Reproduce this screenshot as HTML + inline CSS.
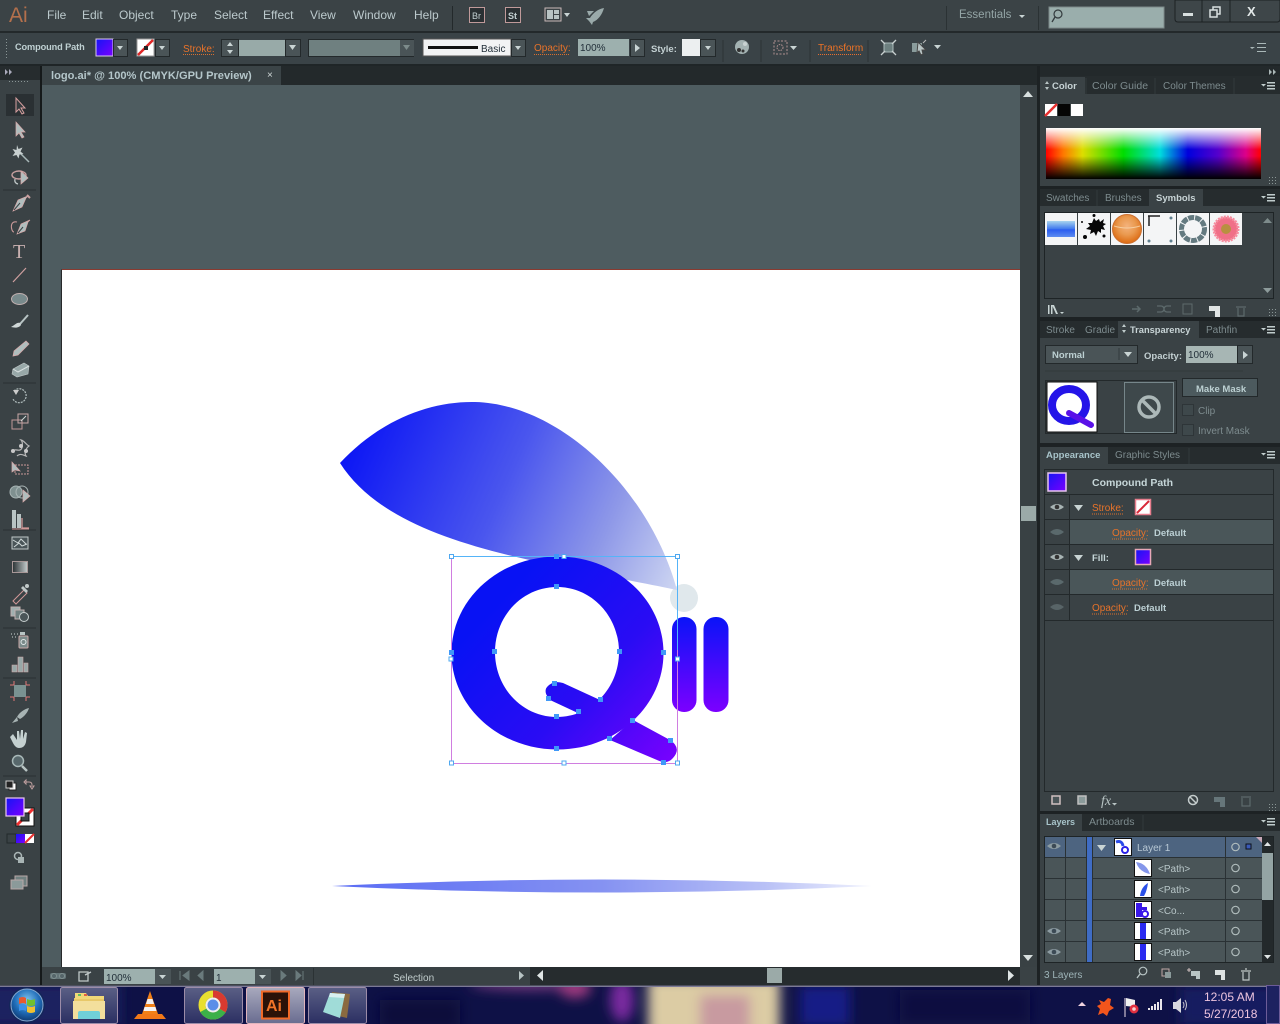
<!DOCTYPE html>
<html><head><meta charset="utf-8"><title>Adobe Illustrator</title>
<style>
html,body{margin:0;padding:0;background:#3a4245;width:1280px;height:1024px;overflow:hidden}
svg{display:block;position:absolute;left:0;top:0;filter:blur(.3px)}
text{font-family:"Liberation Sans",sans-serif;font-size:10px;fill:#c3d0d2}
.m{font-size:12px;fill:#bccacd}
.b{font-weight:bold;font-size:9.500px}
.o{fill:#e8732a}
.d{fill:#7d8b8e}
.k{fill:#23303a}
.ic{fill:#b0bebe;stroke:#d8a8a8;stroke-width:.7}
.st{fill:none;stroke:#c0c8c8;stroke-width:1.3}
.ar{fill:#c9d4d4}
</style></head><body>
<svg width="1280" height="1024" viewBox="0 0 1280 1024" xmlns="http://www.w3.org/2000/svg">
<defs>
<linearGradient id="leaf" gradientUnits="userSpaceOnUse" x1="345" y1="440" x2="680" y2="590"><stop offset="0" stop-color="#0a14f5"/><stop offset=".45" stop-color="#4a56ee"/><stop offset=".75" stop-color="#8e98e8"/><stop offset="1" stop-color="#d0d8f2"/></linearGradient>
<linearGradient id="q" gradientUnits="userSpaceOnUse" x1="500" y1="600" x2="680" y2="770"><stop offset="0" stop-color="#0812f4"/><stop offset=".5" stop-color="#2a0cf4"/><stop offset="1" stop-color="#8000ff"/></linearGradient>
<linearGradient id="bar" x1="0" y1="0" x2="0" y2="1"><stop offset="0" stop-color="#0a14f8"/><stop offset="1" stop-color="#7c00ff"/></linearGradient>
<linearGradient id="sh" x1="0" y1="0" x2="1" y2="0"><stop offset="0" stop-color="#5a6cf4"/><stop offset=".5" stop-color="#8592f2"/><stop offset=".8" stop-color="#b8c0f6"/><stop offset="1" stop-color="#f0f2fd"/></linearGradient>
<linearGradient id="fillg" x1="0" y1="0" x2="1" y2="1"><stop offset="0" stop-color="#1414f5"/><stop offset="1" stop-color="#7a00ff"/></linearGradient>
<linearGradient id="hue" x1="0" y1="0" x2="1" y2="0"><stop offset="0" stop-color="#f00"/><stop offset=".08" stop-color="#f70"/><stop offset=".17" stop-color="#dd0"/><stop offset=".36" stop-color="#0d0"/><stop offset=".53" stop-color="#0dd"/><stop offset=".66" stop-color="#00d"/><stop offset=".8" stop-color="#50c"/><stop offset=".93" stop-color="#d08"/><stop offset="1" stop-color="#f00"/></linearGradient>
<linearGradient id="wb" x1="0" y1="0" x2="0" y2="1"><stop offset="0" stop-color="#fff"/><stop offset=".42" stop-color="#fff" stop-opacity="0"/><stop offset=".55" stop-color="#000" stop-opacity="0"/><stop offset="1" stop-color="#000"/></linearGradient>
<linearGradient id="btn" x1="0" y1="0" x2="0" y2="1"><stop offset="0" stop-color="#5a5f85"/><stop offset="1" stop-color="#2b2f62"/></linearGradient>
<linearGradient id="btnA" x1="0" y1="0" x2="0" y2="1"><stop offset="0" stop-color="#a8a9bd"/><stop offset="1" stop-color="#696c90"/></linearGradient>
<linearGradient id="tg" x1="0" y1="0" x2="1" y2="0"><stop offset="0" stop-color="#2a3134"/><stop offset="1" stop-color="#c4cccc"/></linearGradient>
<radialGradient id="orb" cx=".5" cy=".35" r=".7"><stop offset="0" stop-color="#7fc4ee"/><stop offset=".55" stop-color="#1f6cb8"/><stop offset="1" stop-color="#0c3266"/></radialGradient>
<linearGradient id="bl" x1="0" y1="0" x2="0" y2="1"><stop offset="0" stop-color="#a8d4ee"/><stop offset=".5" stop-color="#3f78ee"/><stop offset=".55" stop-color="#2a5cf0"/><stop offset="1" stop-color="#5d8cf0"/></linearGradient>
<radialGradient id="orng" cx=".5" cy=".4" r=".6"><stop offset="0" stop-color="#f4b27c"/><stop offset=".5" stop-color="#ea9a50"/><stop offset="1" stop-color="#dd6a10"/></radialGradient>
<filter id="blur" x="-30%" y="-80%" width="160%" height="260%"><feGaussianBlur stdDeviation="6"/></filter>
<clipPath id="tb"><rect x="0" y="986" width="1280" height="38"/></clipPath>
<pattern id="grip" width="3" height="3" patternUnits="userSpaceOnUse"><rect width="1" height="1" fill="#8a9696"/></pattern>
</defs>

<!-- base -->
<rect width="1280" height="1024" fill="#3a4245"/>
<rect y="0" width="1280" height="31" fill="#3b4346"/>
<rect y="31" width="1280" height="2" fill="#23292b"/>
<rect y="33" width="1280" height="31" fill="#3a4347"/>
<rect y="64" width="1280" height="2" fill="#1f2527"/>

<!-- title bar -->
<text x="9" y="22" style="font-size:21px;fill:#b4704c">Ai</text>
<text class="m" x="47" y="19">File</text><text class="m" x="82" y="19">Edit</text><text class="m" x="119" y="19">Object</text><text class="m" x="171" y="19">Type</text><text class="m" x="214" y="19">Select</text><text class="m" x="263" y="19">Effect</text><text class="m" x="310" y="19">View</text><text class="m" x="353" y="19">Window</text><text class="m" x="414" y="19">Help</text>
<rect x="452" y="6" width="1" height="24" fill="#23292b"/>
<rect x="469.500" y="7.500" width="15" height="15" fill="#2a3033" stroke="#c09a9a"/><text x="472" y="19" style="font-size:9px">Br</text>
<rect x="505.500" y="7.500" width="15" height="15" fill="#2a3033" stroke="#c09a9a"/><text x="508" y="19" class="b" style="font-size:9px">St</text>
<rect x="545" y="8" width="16" height="13" fill="none" stroke="#c9b8b8"/><rect x="547" y="10" width="6" height="9" fill="#b8c4c4"/><rect x="554" y="10" width="5" height="4" fill="#b8c4c4"/><rect x="554" y="15" width="5" height="4" fill="#b8c4c4"/><path class="ar" d="M564 13h6l-3 4z"/>
<path d="M604 8 C598 9 593 13 590 18 L586 18 L589 21 L592 25 L593 22 C598 20 602 15 604 8Z M587 11 L594 11 L589 16Z" fill="#9aaaaa"/>
<rect x="946" y="6" width="1" height="24" fill="#2b3234"/><rect x="1038" y="6" width="1" height="24" fill="#2b3234"/>
<text x="959" y="18" style="font-size:11.500px;fill:#94a5a6">Essentials</text><path class="ar" d="M1019 15h6l-3 3z"/>
<rect x="1049" y="7" width="115" height="21" fill="#9aaeac" stroke="#7d8a8a"/><circle cx="1058" cy="14" r="4" fill="none" stroke="#333b3e" stroke-width="1.200"/><path d="M1055 17l-3 5" stroke="#333b3e" stroke-width="1.300"/>
<path d="M1175 0h105v19q0 3-3 3h-99q-3 0-3-3z" fill="#3e4649" stroke="#1c2123"/>
<path d="M1202 0v22M1230 0v22" stroke="#1c2123"/>
<rect x="1183" y="13" width="10" height="3" fill="#d8dfdf"/>
<rect x="1213" y="7" width="7" height="7" fill="none" stroke="#d8dfdf" stroke-width="1.500"/><rect x="1210" y="10" width="7" height="7" fill="#3e4649" stroke="#d8dfdf" stroke-width="1.500"/>
<text x="1247" y="16" class="b" style="font-size:13px;fill:#e2e8e8">X</text>

<!-- options bar -->
<rect x="5" y="38" width="2" height="22" fill="url(#grip)"/>
<text x="15" y="50" class="b" style="font-size:9.200px;letter-spacing:-.1px;fill:#bfd0d2">Compound Path</text>
<rect x="96" y="39" width="17" height="17" fill="url(#fillg)" stroke="#d8c8e8"/><rect x="113.500" y="39.500" width="14" height="17" fill="#4a5457" stroke="#23292b"/><path class="ar" d="M117 46h6l-3 4z"/>
<rect x="137" y="39" width="17" height="17" fill="#fff" stroke="#999"/><path d="M138 55L153 40" stroke="#e02828" stroke-width="2.500"/><rect x="144" y="46" width="4" height="4" fill="#222"/><rect x="155.500" y="39.500" width="14" height="17" fill="#4a5457" stroke="#23292b"/><path class="ar" d="M159 46h6l-3 4z"/>
<text x="183" y="52" class="o">Stroke:</text><path d="M183 54.500h31" stroke="#d87030" stroke-dasharray="1 1"/>
<rect x="221.500" y="39.500" width="17" height="17" fill="#4a5457" stroke="#23292b"/><path class="ar" d="M227 46l3-4 3 4zM227 50l3 4 3-4z"/><rect x="239" y="40" width="46" height="16" fill="#98aaa8"/><rect x="285.500" y="39.500" width="15" height="17" fill="#4a5457" stroke="#23292b"/><path class="ar" d="M289 45h7l-3.500 5z"/>
<rect x="308.500" y="39.500" width="105" height="17" fill="#6f8080" stroke="#23292b"/><rect x="400" y="40" width="14" height="16" fill="#4a5457"/><path d="M403 45h7l-3.500 5z" fill="#7d8b8b"/>
<rect x="423" y="39" width="88" height="17" fill="#f2f3f4" stroke="#555"/><rect x="428" y="46" width="50" height="3" fill="#111"/><text x="481" y="52" class="k" style="font-size:10px">Basic</text><rect x="511.500" y="39.500" width="14" height="17" fill="#4a5457" stroke="#23292b"/><path class="ar" d="M515 46h6l-3 4z"/>
<text x="534" y="51" class="o">Opacity:</text><path d="M534 54.500h36" stroke="#d87030" stroke-dasharray="1 1"/>
<rect x="578" y="39" width="51" height="17" fill="#9db0ae"/><text x="580" y="51" class="k" style="font-size:10px">100%</text><rect x="630.500" y="39.500" width="14" height="17" fill="#4a5457" stroke="#23292b"/><path class="ar" d="M635 44l5 4-5 4z"/>
<text x="651" y="52" class="b">Style:</text>
<rect x="682" y="39" width="18" height="17" fill="#eceff0"/><rect x="700.500" y="39.500" width="15" height="17" fill="#4a5457" stroke="#23292b"/><path class="ar" d="M705 46h6l-3 4z"/>
<path d="M723 40v22M761 40v22M810 40v22M868 40v22" stroke="#2c3335"/>
<circle cx="742" cy="47" r="7" fill="#a3b2b2"/><circle cx="739" cy="50" r="2" fill="#333"/><circle cx="743" cy="51" r="1.500" fill="#333"/><circle cx="745" cy="44" r="2" fill="#c8d2d2"/>
<rect x="774" y="41" width="13" height="13" fill="none" stroke="#b09090" stroke-dasharray="2 1.500"/><circle cx="780" cy="47.500" r="3" fill="none" stroke="#b09090" stroke-dasharray="1.500 1"/><path class="ar" d="M790 46h7l-3.500 4z"/>
<text x="818" y="51" style="font-size:10px;fill:#ee7326">Transform</text><path d="M818 54.500h44" stroke="#e87030" stroke-dasharray="1 1"/>
<rect x="884" y="43" width="9" height="9" fill="#6d8080" stroke="#a8b8b8"/><path d="M881 40l4 4M896 40l-4 4M881 55l4-4M896 55l-4-4" stroke="#c8d0d0" stroke-width="1.300"/>
<rect x="912" y="43" width="10" height="9" fill="#8a9c9c"/><path d="M918 42l8 8-4 0 1 4-2 1-2-4-2 2z" fill="#b8c4c4" stroke="#444"/><path d="M926 40l-3 3" stroke="#bbb"/><path class="ar" d="M934 45h7l-3.500 4z"/>
<path d="M1250 47h5l-3 2zM1257 43h9v1h-9zM1257 47h9v1h-9zM1257 51h9v1h-9z" fill="#aab8b8"/>

<!-- tab row -->
<rect y="66" width="1280" height="19" fill="#23292b"/>
<rect x="41" y="66" width="240" height="19" fill="#3b4447"/>
<text x="51" y="79" class="b" style="font-size:11.100px;fill:#b4c6ca">logo.ai* @ 100% (CMYK/GPU Preview)</text>
<text x="267" y="78" style="font-size:10px;fill:#d0d8d8">×</text>

<!-- left toolbar -->
<rect x="0" y="66" width="40" height="920" fill="#3a4245"/>
<rect x="0" y="66" width="40" height="14" fill="#262c2e"/>
<path d="M5 69l3 3-3 3zM9 69l3 3-3 3z" fill="#aab"/>
<rect x="40" y="66" width="2" height="902" fill="#15191a"/>
<rect x="9" y="80" width="20" height="3" fill="url(#grip)"/>
<rect x="6" y="94" width="28" height="22" fill="#2a3033"/>
<path d="M3 190h33M3 383h33M3 530h33M3 628h33M3 678h33M3 776h33" stroke="#2a3032"/>
<!-- tool icons -->
<path d="M16 98l0 14 3-3 3 5 2-1-3-5 4 0z" fill="#333b3e" stroke="#d8a0a0"/>
<path class="ic" d="M16 122l0 14 3-3 3 5 2-1-3-5 4 0z"/>
<path d="M20 153l9 9" stroke="#a8b8b8" stroke-width="1.500"/><path d="M17 145l1.500 4 4-1.500-2 4 3 2.500-4 .5-1 4-2-3.500-4 1 2.500-3.500-2.500-3.500 4 1z" fill="#c8d0d0"/>
<ellipse cx="19" cy="175" rx="7" ry="4" fill="none" stroke="#c8a0a0" stroke-width="1.400"/><path class="ic" d="M21 171v13l7-6z"/><path d="M15 179q-1 4 3 5" class="st"/>
<path class="ic" d="M28 196l-10 4-5 11 9-4 4-9z"/><path d="M27 195l3 3" stroke="#c8a0a0" stroke-width="2"/><path d="M14 210l6-7" stroke="#3a4245"/>
<path class="ic" d="M30 220l-9 4-4 10 8-3 3-9z"/><path d="M17 222c-8-2-6 10-3 10" fill="none" stroke="#c89898" stroke-width="1.100"/><path d="M18 233l5-6" stroke="#3a4245"/>
<text x="13" y="258" style="font-family:'Liberation Serif',serif;font-size:20px;fill:#c8b0b0">T</text>
<path d="M13 282l13-14" stroke="#d0a0a0" stroke-width="1.200"/>
<ellipse cx="19.500" cy="299" rx="8" ry="5.500" fill="#788a8c" stroke="#c0b0b0"/>
<path d="M28 315l-8 9" stroke="#b8c4c4" stroke-width="2"/><path d="M20 323c-3-1-5 2-9 4 4 1 8 1 10-2z" fill="#d0d8d8"/>
<path class="ic" d="M26 341l3 3-11 11-5 1 1-5z"/>
<path d="M13 369l11-6 5 3-1 8-11 3-5-3z" fill="#98a8a8" stroke="#c0c8c8" stroke-width=".6"/><path d="M13 369l5 3 11-6" fill="none" stroke="#d8e0e0"/>
<path d="M14 391a7 7 0 1 1-1 8" fill="none" stroke="#b0bcbc" stroke-width="1.200" stroke-dasharray="2 1"/><path d="M16 395l-3-5 6 0z" fill="#ccc"/>
<rect x="12" y="420" width="10" height="9" fill="none" stroke="#c09898"/><rect x="18" y="414" width="10" height="9" fill="none" stroke="#c8a8a8"/><path d="M21 421l5-5" stroke="#d0d8d8"/>
<path d="M12 452c3-4 5-1 8-2s3-8 1-10c4 1 4 4 8 6-3 2-5 7-3 10-3-1-6-3-9 0" fill="none" stroke="#b8b8b8" stroke-width="1.200"/><circle cx="13" cy="451" r="2" fill="#c8c8c8"/><circle cx="21" cy="446" r="2" fill="#c8c8c8"/><circle cx="26" cy="451" r="2" fill="#c8c8c8"/>
<rect x="15" y="465" width="13" height="9" fill="none" stroke="#c89898" stroke-dasharray="2 1"/><path class="ic" d="M12 462v10l3-2 5 1z"/>
<circle cx="16" cy="492" r="6" fill="#7f9090" stroke="#a8b4b4"/><circle cx="22" cy="492" r="6" fill="none" stroke="#a8b4b4"/><path class="ic" d="M23 490v12l7-6z"/>
<path d="M12 510v18h4v-18zM17 514v14h4v-14z" fill="#b8c4c4"/><path d="M22 518v10h7" fill="none" stroke="#d09898" stroke-width="1.300"/><path d="M12 529h17" stroke="#d09898"/>
<rect x="12" y="537" width="16" height="12" fill="#4a5558" stroke="#c0c8c8"/><path d="M13 540l5 3 3-4 5 5M14 547l5-4 3 3 5-2" fill="none" stroke="#d0d8d8"/>
<rect x="12.500" y="561.500" width="15" height="11" fill="url(#tg)" stroke="#a89898"/>
<path d="M13 601l11-11 3 3-11 11z" fill="#3a4245" stroke="#d09898"/><path d="M23 586l5 5-2 2-5-5z" fill="#c0c8c8"/><circle cx="27" cy="586" r="2" fill="#c0c8c8"/>
<rect x="11" y="607" width="9" height="9" fill="#a0b0b0" stroke="#c0b0b0"/><rect x="15" y="610" width="9" height="9" fill="#708080" stroke="#c0b0b0"/><circle cx="24" cy="617" r="4.500" fill="#4a5558" stroke="#c8d0d0"/>
<path d="M11 634h1M14 634h1M17 634h1M12 637h1M15 637h1" stroke="#d0d8d8"/><rect x="19" y="636" width="9" height="12" rx="1" fill="#7a8a8a" stroke="#c8a8a8"/><circle cx="23.500" cy="642" r="2.500" fill="none" stroke="#e0e8e8"/><rect x="20" y="632" width="5" height="3" fill="#b8c4c4"/>
<path d="M12 672v-7h5v7zM18 672v-15h5v15zM24 672v-9h4v9z" fill="#98a8a8" stroke="#d0a8a8" stroke-width=".6"/>
<rect x="14" y="685" width="12" height="12" fill="#7a9292"/><path d="M10 685h4M26 685h4M10 697h4M26 697h4M14 681v4M26 681v4M14 697v4M26 697v4" stroke="#e07878"/>
<path d="M29 708c-5 1-10 5-12 9l3 2c4-2 8-7 9-11zM17 717l-5 6 6-2z" fill="#a8b4b4"/>
<path d="M13 734l4 6v-9l2 0 1 8 1-9 2 0 0 9 2-7 2 1-1 9c-1 4-3 6-7 6-3 0-5-3-6-5l-3-6z" fill="#c4d0d0"/>
<circle cx="18" cy="761" r="5.500" fill="#58686c" stroke="#a8b8b8" stroke-width="1.500"/><path d="M22 766l5 5" stroke="#b8c4c4" stroke-width="2.500"/>
<rect x="9" y="783" width="7" height="7" fill="#fff" stroke="#222"/><rect x="6" y="781" width="7" height="7" fill="#222" stroke="#ccc"/>
<path d="M26 782h3c2 0 3 1 3 3M32 789l-2-3h4zM26 780v4l-2-2z" fill="none" stroke="#c0a0a0" stroke-width="1"/>
<rect x="16" y="808" width="18" height="18" fill="#fff" stroke="#111"/><path d="M17 825L33 809" stroke="#ef3030" stroke-width="3"/><rect x="21" y="813" width="8" height="8" fill="#3a4245" stroke="#111"/>
<rect x="6" y="798" width="18" height="18" fill="url(#fillg)" stroke="#ecc8ee" stroke-width="1.200"/>
<rect x="7" y="834" width="9" height="9" fill="#3a4245" stroke="#23292b"/><rect x="16" y="834" width="9" height="9" fill="url(#fillg)"/><rect x="25" y="834" width="9" height="9" fill="#fff"/><path d="M25 843l9-9" stroke="#e83030" stroke-width="2"/>
<circle cx="18" cy="856" r="3.500" fill="none" stroke="#aab6b6" stroke-width="1.500"/><rect x="18" y="857" width="6" height="6" fill="#a8b4b4"/>
<rect x="15" y="876" width="12" height="10" fill="#708080" stroke="#b8a8a8"/><rect x="11" y="880" width="12" height="9" fill="#8b9a9a" stroke="#b8a8a8"/>

<!-- canvas -->
<rect x="42" y="85" width="978" height="882" fill="#4e5c60"/>
<rect x="62" y="270" width="958" height="697" fill="#fff"/>
<path d="M62 269.500H1020" stroke="#8a3a30"/><path d="M61.500 269.500V967" stroke="#27292a"/>
<!-- artwork -->
<ellipse cx="684" cy="598" rx="14" ry="14" fill="#e0e8ec"/>
<path d="M340 463C380 420 430 401 475 402C560 404 650 490 677 590C640 582 560 568 500 553C430 535 370 510 340 463Z" fill="url(#leaf)"/>
<path fill-rule="evenodd" d="M557.500 556.500c58.500 0 106 43 106 96.500s-47.500 96.500-106 96.500-106-43-106-96.500 47.500-96.500 106-96.500zM557 587c-34.500 0-62 29-62 65s27.500 65 62 65 62-29 62-65-27.500-65-62-65z" fill="url(#q)"/>
<path d="M633 720L670 740Q682 748 673 758Q667 765 657 760L610 740Z" fill="url(#q)"/>
<path d="M563 683L600 700L610 715L580 714L550 700Q543 692 547 687Q553 680 563 683Z" fill="url(#q)"/>
<rect x="672" y="617" width="24.500" height="95" rx="12" fill="url(#bar)"/>
<rect x="703.500" y="617" width="25" height="95" rx="12" fill="url(#bar)"/>
<path d="M332 886Q600 873 872 886Q600 899 332 886Z" fill="url(#sh)"/>
<!-- selection -->
<rect x="451.500" y="556.500" width="226" height="207" fill="none" stroke="#d07ee0" stroke-width="1"/>
<path d="M451 556.500H677.500V650" fill="none" stroke="#55b4f8"/>
<g fill="#fff" stroke="#4ea8f0" stroke-width="1"><rect x="449.500" y="554.500" width="4" height="4"/><rect x="562" y="554.500" width="4" height="4"/><rect x="675.500" y="554.500" width="4" height="4"/><rect x="449" y="657" width="4" height="4"/><rect x="675.500" y="657" width="4" height="4"/><rect x="449.500" y="761" width="4" height="4"/><rect x="562" y="761" width="4" height="4"/><rect x="675.500" y="761" width="4" height="4"/></g>
<g fill="#3f98f8"><rect x="554" y="554" width="5" height="5"/><rect x="554" y="584" width="5" height="5"/><rect x="449" y="650" width="5" height="5"/><rect x="492" y="649" width="5" height="5"/><rect x="617" y="649" width="5" height="5"/><rect x="661" y="650" width="5" height="5"/><rect x="552" y="681" width="5" height="5"/><rect x="546" y="696" width="5" height="5"/><rect x="598" y="697" width="5" height="5"/><rect x="576" y="709" width="5" height="5"/><rect x="554" y="714" width="5" height="5"/><rect x="630" y="718" width="5" height="5"/><rect x="607" y="736" width="5" height="5"/><rect x="554" y="746" width="5" height="5"/><rect x="668" y="738" width="5" height="5"/><rect x="661" y="760" width="5" height="5"/></g>

<!-- v scrollbar -->
<rect x="1020" y="85" width="18" height="882" fill="#394144"/>
<rect x="1037" y="66" width="3" height="920" fill="#1d2224"/>
<path d="M1023 97l5-6 5 6z" fill="#d8dfdf"/><path d="M1023 955l5 6 5-6z" fill="#d8dfdf"/>
<rect x="1021" y="506" width="15" height="15" fill="#9baaa8"/>

<!-- status bar -->
<rect x="42" y="967" width="995" height="18" fill="#3a4245"/>
<rect x="0" y="985" width="1280" height="1" fill="#1d2224"/>
<path d="M40 968h2v17h-2z" fill="#15191a"/>
<rect x="50" y="973" width="16" height="6" rx="2" fill="#647478"/><circle cx="54" cy="976" r="2.500" fill="#55656a" stroke="#7f8f90"/><circle cx="62" cy="976" r="2.500" fill="#55656a" stroke="#7f8f90"/>
<path d="M79 972h9v9h-9zM85 975l6-3" fill="none" stroke="#c0c8c8" stroke-width="1.300"/>
<rect x="104" y="969" width="51" height="15" fill="#9db0ae"/><text x="106" y="981" class="k" style="font-size:10px">100%</text><rect x="155" y="969" width="16" height="15" fill="#4a5457"/><path class="ar" d="M159 975h7l-3.500 4z"/>
<path d="M180 971v9M189 971l-6 4.500 6 4.500zM203 971l-5 4.500 5 4.500z" fill="#6a7a7c" stroke="#6a7a7c"/>
<rect x="214" y="969" width="41" height="15" fill="#9db0ae"/><text x="216" y="981" class="k" style="font-size:10px">1</text><rect x="255" y="969" width="16" height="15" fill="#4a5457"/><path class="ar" d="M259 975h7l-3.500 4z"/>
<path d="M281 971l5 4.500-5 4.500zM296 971l5 4.500-5 4.500zM303 971v9" fill="#6a7a7c" stroke="#6a7a7c"/>
<rect x="313" y="968" width="1" height="17" fill="#2b3234"/>
<text x="393" y="981" style="font-size:10px;fill:#c0cccc">Selection</text>
<path d="M519 971l5 4.500-5 4.500z" fill="#b8c4c4"/><rect x="530" y="967" width="490" height="18" fill="#262c2e"/><path d="M543 970l-6 5.500 6 5.500z" fill="#dfe5e5"/><path d="M1008 970l6 5.500-6 5.500z" fill="#dfe5e5"/><rect x="767" y="968" width="15" height="15" fill="#9baaa8"/>

<!-- right panels -->
<rect x="1040" y="66" width="240" height="10" fill="#23292b"/>
<path d="M1269 69l3 3-3 3zM1273 69l3 3-3 3z" fill="#aab6b6"/>
<!-- color panel -->
<rect x="1040" y="76" width="240" height="18" fill="#262c2e"/>
<rect x="1040" y="77" width="45" height="17" fill="#3a4245"/>
<text x="1052" y="89" class="b" style="fill:#c8d4d6">Color</text><path d="M1047 84l-2 0 2-3 2 3zM1047 87l-2 0 2 3 2-3z" fill="#b8c4c4"/>
<text x="1092" y="89" class="d" style="font-size:10.500px">Color Guide</text><text x="1163" y="89" class="d">Color Themes</text>
<path d="M1086 78v16M1155 78v16M1234 78v16" stroke="#333a3c"/>
<path d="M1261 84h5l-2.500 2.500zM1267 82h8v1.500h-8zM1267 85h8v1.500h-8zM1267 88h8v1.500h-8z" fill="#c0cccc"/>
<rect x="1045" y="104" width="12" height="12" fill="#fff"/><path d="M1045 116l12-12" stroke="#e83030" stroke-width="2.500"/><rect x="1058" y="104" width="12" height="12" fill="#050505"/><rect x="1071" y="104" width="12" height="12" fill="#fff"/>
<rect x="1046" y="128" width="215" height="51" fill="url(#hue)"/><rect x="1046" y="128" width="215" height="51" fill="url(#wb)"/>
<rect x="1268" y="176" width="9" height="9" fill="url(#grip)"/>
<rect x="1040" y="186" width="240" height="3" fill="#1d2224"/>
<!-- swatches panel -->
<rect x="1040" y="189" width="240" height="17" fill="#262c2e"/><rect x="1149" y="189" width="54" height="17" fill="#3a4245"/>
<text x="1046" y="201" class="d">Swatches</text><text x="1105" y="201" class="d">Brushes</text><text x="1156" y="201" class="b" style="fill:#c8d4d6">Symbols</text>
<path d="M1097 190v16" stroke="#333a3c"/>
<path d="M1261 196h5l-2.500 2.500zM1267 194h8v1.500h-8zM1267 197h8v1.500h-8zM1267 200h8v1.500h-8z" fill="#c0cccc"/>
<rect x="1044.500" y="212.500" width="229" height="86" fill="#3a4245" stroke="#1e2426"/>
<g fill="#f4f5f6"><rect x="1045" y="213" width="32" height="32"/><rect x="1078" y="213" width="32" height="32"/><rect x="1111" y="213" width="32" height="32"/><rect x="1144" y="213" width="32" height="32"/><rect x="1177" y="213" width="32" height="32"/><rect x="1210" y="213" width="32" height="32"/></g>
<rect x="1047" y="221" width="28" height="16" fill="url(#bl)"/>
<path d="M1094 218l2 3 3-2 1 3 4-3-1 4 3 1-3 2 2 4-4-1 0 4-3-2-2 5-2-4-4 2 1-4-5-1 4-3-2-3 4 0z" fill="#070707"/><circle cx="1085" cy="237" r="2" fill="#070707"/><circle cx="1104" cy="236" r="1.500" fill="#070707"/><circle cx="1094" cy="215.500" r="1.500" fill="#070707"/><circle cx="1082" cy="222" r="1" fill="#070707"/>
<circle cx="1127" cy="229" r="14.500" fill="url(#orng)" stroke="#cc7030"/><path d="M1114 226q13 4 26 0" fill="none" stroke="#f8d8b0" opacity=".8"/>
<path d="M1148 216h12M1149 216v10" stroke="#222" stroke-width="1.500"/><circle cx="1171" cy="218" r="1.500" fill="#608090"/><circle cx="1149" cy="241" r="1.500" fill="#608090"/><circle cx="1171" cy="241" r="1.500" fill="#608090"/>
<circle cx="1193" cy="229" r="11.500" fill="none" stroke="#647a80" stroke-width="5" stroke-dasharray="6 1"/>
<circle cx="1226" cy="229" r="12" fill="#f07088" stroke="#f68ea0" stroke-width="3" stroke-dasharray="2 1"/><circle cx="1226" cy="229" r="5" fill="#b89040"/>
<path d="M1263 223l4.500-5 4.500 5z" fill="#7d8b8b"/><path d="M1263 288l4.500 5 4.500-5z" fill="#8d9b9b"/>
<path d="M1048 314v-9h1.500v9zM1051 314v-9h1.500v9zM1054 305l4 9h-2l-4-9z" fill="#c8d4d4"/><path d="M1060 312h4l-2 2z" fill="#c8d4d4"/>
<path d="M1132 309h8m-3-3l3 3-3 3" stroke="#5d6a6c" fill="none" stroke-width="1.500"/>
<path d="M1157 306h4a3 3 0 0 1 0 6h-4M1171 306h-4a3 3 0 0 0 0 6h4" stroke="#5d6a6c" fill="none" stroke-width="1.300"/>
<rect x="1183" y="304" width="9" height="10" fill="none" stroke="#5d6a6c"/>
<path d="M1209 306h11v11h-5v-6h-6z" fill="#e0e4e4"/>
<path d="M1236 307h10M1238 308v8h6v-8" stroke="#5d6a6c" fill="none" stroke-width="1.200"/>
<rect x="1268" y="308" width="9" height="9" fill="url(#grip)"/>
<rect x="1040" y="317" width="240" height="4" fill="#1d2224"/>
<!-- transparency panel -->
<rect x="1040" y="321" width="240" height="17" fill="#262c2e"/><rect x="1118" y="321" width="81" height="17" fill="#3a4245"/>
<text x="1046" y="333" class="d">Stroke</text><text x="1085" y="333" class="d">Gradie</text><text x="1130" y="333" class="b" style="fill:#c8d4d6;font-size:9.300px">Transparency</text><text x="1206" y="333" class="d">Pathfin</text>
<path d="M1124 327l-2 0 2-3 2 3zM1124 330l-2 0 2 3 2-3z" fill="#c0cccc"/>
<path d="M1261 328h5l-2.500 2.500zM1267 326h8v1.500h-8zM1267 329h8v1.500h-8zM1267 332h8v1.500h-8z" fill="#c0cccc"/>
<rect x="1045.500" y="345.500" width="92" height="18" fill="#4a5457" stroke="#23292b"/><text x="1052" y="358" class="b" style="fill:#bcd0d2">Normal</text><path d="M1119 348v12" stroke="#333a3c"/><path class="ar" d="M1124 352h8l-4 5z"/>
<text x="1144" y="359" class="b">Opacity:</text>
<rect x="1186" y="346" width="51" height="17" fill="#a7b6b4"/><text x="1188" y="358" class="k" style="font-size:10px">100%</text><rect x="1237.500" y="345.500" width="15" height="18" fill="#4a5457" stroke="#23292b"/><path class="ar" d="M1243 351l5 4-5 4z"/>
<path d="M1045 371h198" stroke="#333a3c"/>
<rect x="1045.500" y="380.500" width="131" height="53" fill="#3a4245" stroke="#23292b"/>
<rect x="1047" y="382" width="50" height="50" fill="#fff" stroke="#0c0c0c"/>
<ellipse cx="1069" cy="405" rx="17" ry="16" fill="none" stroke="#2414e8" stroke-width="8"/><path d="M1069 413L1091 425" stroke="#5a10e8" stroke-width="6" stroke-linecap="round"/>
<rect x="1124.500" y="382.500" width="49" height="50" fill="#3e484b" stroke="#76868a"/><circle cx="1149" cy="407" r="10" fill="none" stroke="#acb8b8" stroke-width="3.500"/><path d="M1142 400l14 14" stroke="#acb8b8" stroke-width="3.500"/>
<rect x="1182.500" y="378.500" width="75" height="18" fill="#4c5a5e" stroke="#23292b"/><text x="1196" y="392" class="b" style="fill:#bcd0d2">Make Mask</text>
<rect x="1182.500" y="404.500" width="11" height="11" fill="#3e484b" stroke="#2e3538"/><text x="1198" y="414" class="d">Clip</text>
<rect x="1182.500" y="424.500" width="11" height="11" fill="#3e484b" stroke="#2e3538"/><text x="1198" y="434" class="d">Invert Mask</text>
<rect x="1040" y="443" width="240" height="4" fill="#1d2224"/>
<!-- appearance -->
<rect x="1040" y="447" width="240" height="17" fill="#262c2e"/><rect x="1040" y="447" width="68" height="17" fill="#3a4245"/>
<text x="1046" y="458" class="b" style="fill:#a8c4ca">Appearance</text><text x="1115" y="458" class="d">Graphic Styles</text>
<path d="M1189 448v16" stroke="#333a3c"/>
<path d="M1261 453h5l-2.500 2.500zM1267 451h8v1.500h-8zM1267 454h8v1.500h-8zM1267 457h8v1.500h-8z" fill="#c0cccc"/>
<rect x="1044.500" y="469.500" width="229" height="322" fill="#3a4245" stroke="#23292b"/>
<rect x="1070" y="520" width="203" height="24" fill="#4a5659"/><rect x="1070" y="570" width="203" height="24" fill="#4a5659"/>
<path d="M1045 494.500h228M1045 519.500h228M1045 544.500h228M1045 569.500h228M1045 594.500h228M1045 620.500h228M1069.500 495v125" stroke="#23292b"/>
<rect x="1048" y="473" width="18" height="18" fill="url(#fillg)" stroke="#e8c4ee" stroke-width="1.500"/>
<text x="1092" y="486" class="b" style="font-size:10.500px;fill:#c6d6d8">Compound Path</text>
<path d="M1050 507q7-6 14 0q-7 6-14 0z" fill="#a8b4b4"/><circle cx="1057" cy="507" r="2.300" fill="#333"/>
<path class="ar" d="M1074 505h9l-4.500 6z"/>
<text x="1092" y="511" class="o">Stroke:</text><path d="M1092 514h31" stroke="#d87030" stroke-dasharray="1 1"/>
<rect x="1135.500" y="499.500" width="15" height="15" fill="#fff" stroke="#e87e8e" stroke-width="1.500"/><path d="M1137 513l12-12" stroke="#d82838" stroke-width="2"/>
<path d="M1050 532q7-6 14 0q-7 6-14 0z" fill="#5a696c"/><path d="M1050 582q7-6 14 0q-7 6-14 0z" fill="#5a696c"/><path d="M1050 607q7-6 14 0q-7 6-14 0z" fill="#586467"/>
<text x="1112" y="536" class="o">Opacity:</text><path d="M1112 539h36" stroke="#d87030" stroke-dasharray="1 1"/><text x="1154" y="536" class="b" style="fill:#bcd0d4">Default</text>
<path d="M1050 557q7-6 14 0q-7 6-14 0z" fill="#a8b4b4"/><circle cx="1057" cy="557" r="2.300" fill="#333"/>
<path class="ar" d="M1074 555h9l-4.500 6z"/>
<text x="1092" y="561" class="b" style="fill:#c6d6d8">Fill:</text>
<rect x="1135.500" y="549.500" width="15" height="15" fill="url(#fillg)" stroke="#e8a8b8" stroke-width="1.500"/>
<text x="1112" y="586" class="o">Opacity:</text><path d="M1112 589h36" stroke="#d87030" stroke-dasharray="1 1"/><text x="1154" y="586" class="b" style="fill:#bcd0d4">Default</text>
<text x="1092" y="611" class="o">Opacity:</text><path d="M1092 614h36" stroke="#d87030" stroke-dasharray="1 1"/><text x="1134" y="611" class="b" style="fill:#bcd0d4">Default</text>
<rect x="1052" y="796" width="8" height="8" fill="#4a5558" stroke="#d0c0c0" stroke-width="1.500"/>
<rect x="1078" y="796" width="8" height="8" fill="#8a9a9a" stroke="#c0c0c0" stroke-width="1.500"/>
<text x="1101" y="805" style="font-family:'Liberation Serif',serif;font-style:italic;font-size:14px;fill:#b8c4c4">fx</text><path d="M1112 803h5l-2.500 2.500z" fill="#b8c4c4"/>
<circle cx="1193" cy="800" r="4.500" fill="none" stroke="#c4cccc" stroke-width="1.500"/><path d="M1190 797l6 6" stroke="#c4cccc" stroke-width="1.500"/>
<path d="M1214 797h11v10h-5v-5h-6z" fill="#66767a"/>
<path d="M1241 797h10M1242 798v8h8v-8" stroke="#5d6a6c" fill="none" stroke-width="1.200"/>
<rect x="1268" y="803" width="9" height="9" fill="url(#grip)"/>
<rect x="1040" y="811" width="240" height="3" fill="#1d2224"/>
<!-- layers -->
<rect x="1040" y="814" width="240" height="17" fill="#262c2e"/><rect x="1040" y="814" width="42" height="17" fill="#3a4245"/>
<text x="1046" y="825" class="b" style="fill:#a8c4ca;font-size:9px">Layers</text><text x="1089" y="825" class="d" style="font-size:10.500px">Artboards</text>
<path d="M1143 815v16" stroke="#333a3c"/>
<path d="M1261 820h5l-2.500 2.500zM1267 818h8v1.500h-8zM1267 821h8v1.500h-8zM1267 824h8v1.500h-8z" fill="#c0cccc"/>
<rect x="1044.500" y="836.500" width="229" height="126" fill="#4a5558" stroke="#1e2426"/>
<rect x="1045" y="837" width="180" height="20" fill="#4d6480"/><rect x="1226" y="837" width="36" height="20" fill="#4d6480"/>
<path d="M1045 857.500h217M1045 878.500h217M1045 899.500h217M1045 920.500h217M1045 941.500h217M1065.500 837v125M1086.500 837v125M1092.500 837v125M1225.500 837v125" stroke="#2a3134"/>
<rect x="1087" y="837" width="5" height="125" fill="#3f6cc4"/>
<path d="M1256 837h6v6z" fill="#c8a8b8"/>
<path d="M1047 846q7-6 14 0q-7 6-14 0z" fill="#8d9ca2"/><circle cx="1054" cy="846" r="2.300" fill="#3c4a55"/>
<path d="M1047 931q7-6 14 0q-7 6-14 0z" fill="#8d9ca2"/><circle cx="1054" cy="931" r="2.300" fill="#3c4a55"/>
<path d="M1047 952q7-6 14 0q-7 6-14 0z" fill="#8d9ca2"/><circle cx="1054" cy="952" r="2.300" fill="#3c4a55"/>
<path class="ar" d="M1097 845h9l-4.500 6z"/>
<rect x="1114.500" y="838.500" width="17" height="17" fill="#fff" stroke="#111"/><path d="M1116 842q6-2 7 4" stroke="#2a4ae8" stroke-width="3" fill="none"/><circle cx="1125" cy="850" r="3" fill="none" stroke="#2a20e8" stroke-width="2"/>
<text x="1137" y="851" style="fill:#b8c8d4">Layer 1</text>
<g fill="#fff" stroke="#111"><rect x="1134.500" y="859.500" width="17" height="17"/><rect x="1134.500" y="880.500" width="17" height="17"/><rect x="1134.500" y="901.500" width="17" height="17"/><rect x="1134.500" y="922.500" width="17" height="17"/><rect x="1134.500" y="943.500" width="17" height="17"/></g>
<path d="M1136 862q10 1 14 12q-11-2-14-12z" fill="#8496ea"/>
<path d="M1140 896q1-9 8-13q-1 8-4 13z" fill="#2a50e8"/>
<path d="M1136 903v14h6v-7h5v-3h-5v-4z" fill="#3a18e8"/><circle cx="1145" cy="914" r="3" fill="none" stroke="#3a18e8" stroke-width="2"/>
<rect x="1140" y="923" width="6" height="16" fill="#2a2af0"/><rect x="1140" y="944" width="6" height="16" fill="#2a2af0"/>
<text x="1158" y="872" style="fill:#b8c6c8">&lt;Path&gt;</text><text x="1158" y="893" style="fill:#b8c6c8">&lt;Path&gt;</text><text x="1158" y="914" style="fill:#b8c6c8">&lt;Co...</text><text x="1158" y="935" style="fill:#b8c6c8">&lt;Path&gt;</text><text x="1158" y="956" style="fill:#b8c6c8">&lt;Path&gt;</text>
<g fill="none" stroke="#b0bcbc" stroke-width="1.200"><circle cx="1235.500" cy="847" r="3.700"/><circle cx="1235.500" cy="868" r="3.700"/><circle cx="1235.500" cy="889" r="3.700"/><circle cx="1235.500" cy="910" r="3.700"/><circle cx="1235.500" cy="931" r="3.700"/><circle cx="1235.500" cy="952" r="3.700"/></g>
<rect x="1246" y="844" width="5" height="5" fill="#3a5ab8" stroke="#0c1018"/>
<rect x="1262" y="837" width="11" height="125" fill="#23292b"/><rect x="1262" y="853" width="11" height="47" fill="#94a4a4"/>
<path d="M1264 846l3.500-4 3.500 4z" fill="#e0e5e5"/><path d="M1264 955l3.500 4 3.500-4z" fill="#e0e5e5"/>
<text x="1044" y="978" style="font-size:10px;fill:#9eb4b8">3 Layers</text>
<circle cx="1143" cy="971" r="3.800" fill="none" stroke="#b8c4c4" stroke-width="1.200"/><path d="M1140 974l-3 4" stroke="#b8c4c4" stroke-width="1.300"/>
<rect x="1162" y="969" width="7" height="7" fill="#3a4245" stroke="#c0a8a8"/><rect x="1165" y="972" width="6" height="6" fill="#8a9a9a"/>
<path d="M1187 970h4m-2-2v4" stroke="#d0c0c0"/><path d="M1191 971h9v8h-4v-3h-5z" fill="#b8c4c4"/>
<path d="M1215 970h10v10h-4v-5h-6z" fill="#dde2e2"/>
<path d="M1241 971h10M1243 972v8h6v-8M1245 969h2" stroke="#c0c8c8" fill="none" stroke-width="1.200"/>

<!-- taskbar -->
<rect x="0" y="986" width="1280" height="38" fill="#0e1146"/>
<g clip-path="url(#tb)"><g filter="url(#blur)">
<rect x="-20" y="984" width="140" height="42" fill="#1d2460"/>
<rect x="380" y="1000" width="80" height="30" fill="#0a0f3a"/>
<ellipse cx="530" cy="984" rx="60" ry="6" fill="#7a3a80"/>
<ellipse cx="575" cy="988" rx="16" ry="10" fill="#a03a80"/>
<ellipse cx="622" cy="1000" rx="12" ry="22" fill="#7a2aa0"/>
<rect x="648" y="978" width="132" height="60" fill="#dccca4"/>
<rect x="700" y="995" width="50" height="40" fill="#c89aa0"/>
<rect x="800" y="986" width="50" height="40" fill="#151a86"/>
<rect x="900" y="990" width="130" height="34" fill="#0a0c40"/>
<rect x="1180" y="986" width="110" height="40" fill="#141a60"/>
</g></g>
<rect x="0" y="985.500" width="1280" height="1.500" fill="#7c7a96"/>
<circle cx="27" cy="1005" r="18" fill="#0d2a55" opacity=".6"/><circle cx="27" cy="1005" r="16" fill="url(#orb)" stroke="#88a8d0"/>
<path d="M19 998q4-2 7 0v6q-3-2-7 0z" fill="#e85a30"/><path d="M27 999q4 2 8 0v6q-4 2-8 0z" fill="#70c030"/><path d="M19 1005q4-2 7 0v6q-3-2-7 0z" fill="#3a90e8"/><path d="M27 1006q4 2 8 0v6q-4 2-8 0z" fill="#f0c030"/>
<rect x="60.500" y="987.500" width="57" height="36" rx="2" fill="url(#btn)" stroke="#9c8ca8"/>
<path d="M74 998h30v4H74z" fill="#e8c868"/><path d="M75 993h11l2 3h16v3H75z" fill="#f0d878"/><rect x="73" y="1001" width="32" height="18" fill="#f3df9c"/><path d="M78 1019v-6q0-2 2-2h18q2 0 2 2v6z" fill="#70d0d8"/><rect x="78" y="994" width="3" height="2" fill="#60c060"/><rect x="84" y="994" width="3" height="2" fill="#e06040"/>
<path d="M150 991l-8 23h16z" fill="#f08018"/><path d="M147.500 999h5l1.500 5h-8z" fill="#f0f0f0"/><path d="M144.500 1007h11l1 4h-13z" fill="#f4f4f4"/><path d="M138 1014h24l4 5h-32z" fill="#f07818"/>
<rect x="184.500" y="987.500" width="58" height="36" rx="2" fill="url(#btn)" stroke="#9c8ca8"/>
<g fill="none" stroke-width="7" transform="rotate(-90 213 1005)"><circle cx="213" cy="1005" r="11" stroke="#e8e030"/><circle cx="213" cy="1005" r="11" stroke="#d83a30" stroke-dasharray="23 46.200"/><circle cx="213" cy="1005" r="11" stroke="#3cb048" stroke-dasharray="23 46.200" stroke-dashoffset="-23"/></g>
<circle cx="213" cy="1005" r="7.500" fill="#f0f0f0"/><circle cx="213" cy="1005" r="5.500" fill="#5a8ee8"/>
<rect x="246.500" y="987.500" width="58" height="36" rx="2" fill="url(#btnA)" stroke="#e0b4bc"/>
<rect x="262" y="991.500" width="27" height="27" fill="#2a1208" stroke="#f06a28" stroke-width="2"/><text x="266" y="1011" class="b" style="font-size:16px;fill:#f07428">Ai</text>
<rect x="308.500" y="987.500" width="58" height="36" rx="2" fill="url(#btn)" stroke="#9c8ca8"/>
<path d="M332 992l18 2-3 24-17-4z" fill="#8a6a40"/><path d="M330 993l15 1-5 24-17-6z" fill="#a0dcd8"/><path d="M330 993l15 1-1 4-15-1z" fill="#d8f0f0"/>
<path d="M1078 1006l4-4 4 4z" fill="#f0d4e0"/>
<path d="M1099 1000l5 2 4-4 3 1-1 6 4 3-5 3-2 5-4-3-5 2 2-6-3-3 4-2z" fill="#f2551c"/>
<path d="M1125 998v19" stroke="#f0e0e8"/><path d="M1126 998l9 2v7l-9-1z" fill="#f0f0f0"/><circle cx="1134" cy="1009" r="4.500" fill="#e03040"/><circle cx="1134" cy="1009" r="1.800" fill="#f4d0d0"/>
<path d="M1148 1008h2v2h-2zM1151 1006h2v4h-2zM1154 1004h2v6h-2zM1157 1002h2v8h-2zM1160 999h2v11h-2z" fill="#e8e4ea"/>
<path d="M1173 1002h3l5-4v15l-5-4h-3z" fill="#d8d8de"/><path d="M1183 1002q2 3 0 6M1185 1000q3 5 0 10" stroke="#c8c8d0" fill="none"/>
<text x="1204" y="1001" style="font-size:12px;fill:#eec4de">12:05 AM</text>
<text x="1204" y="1018" style="font-size:12px;fill:#eec4de">5/27/2018</text>
<rect x="1266.500" y="985.500" width="13" height="38" fill="#1d2260" stroke="#6c5c98"/>
</svg>
</body></html>
